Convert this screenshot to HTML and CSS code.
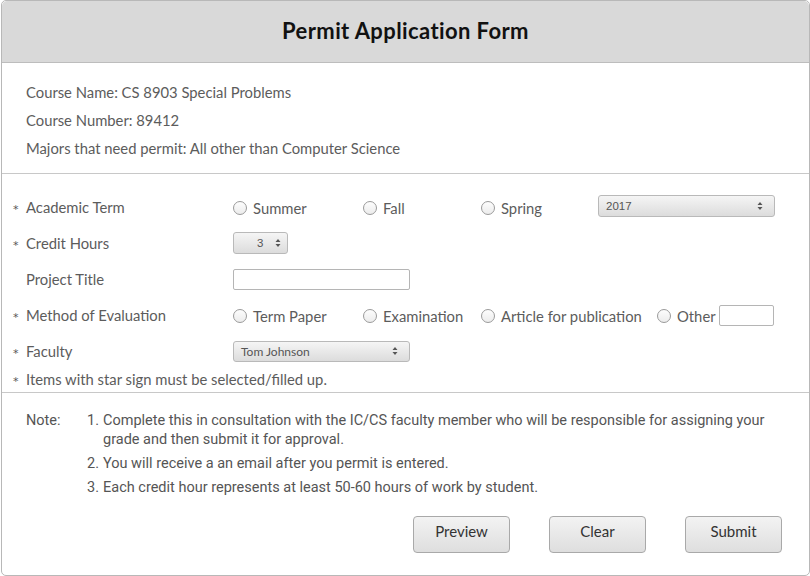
FILE: index.html
```html
<!DOCTYPE html>
<html>
<head>
<meta charset="utf-8">
<link rel="stylesheet" href="styles.css">
</head>
<body>
<div class="frame">
  <header class="head"><h1>Permit Application Form</h1></header>

  <section class="info">
    <p>Course Name: CS 8903 Special Problems</p>
    <p>Course Number: 89412</p>
    <p>Majors that need permit: All other than Computer Science</p>
  </section>

  <section class="form">
    <div class="row">
      <span class="star">*</span><span class="label">Academic Term</span>
      <div class="opts opts-term">
        <label class="opt"><span class="radio"></span>Summer</label>
        <label class="opt"><span class="radio"></span>Fall</label>
        <label class="opt"><span class="radio"></span>Spring</label>
        <div class="select select-year"><span>2017</span><span class="arrows"><svg width="6" height="10" viewBox="0 0 6 10"><path d="M0.5 4 L3 1 L5.5 4Z M0.5 6 L3 9 L5.5 6Z" fill="#555"/></svg></span></div>
      </div>
    </div>
    <div class="row">
      <span class="star">*</span><span class="label">Credit Hours</span>
      <div class="select spinner"><span>3</span><span class="arrows"><svg width="6" height="10" viewBox="0 0 6 10"><path d="M0.5 4 L3 1 L5.5 4Z M0.5 6 L3 9 L5.5 6Z" fill="#555"/></svg></span></div>
    </div>
    <div class="row">
      <span class="star"></span><span class="label">Project Title</span>
      <div class="textbox title-box"></div>
    </div>
    <div class="row">
      <span class="star">*</span><span class="label">Method of Evaluation</span>
      <div class="opts opts-method">
        <label class="opt"><span class="radio"></span>Term Paper</label>
        <label class="opt"><span class="radio"></span>Examination</label>
        <label class="opt"><span class="radio"></span>Article for publication</label>
        <label class="opt"><span class="radio"></span>Other<span class="textbox other-box"></span></label>
      </div>
    </div>
    <div class="row">
      <span class="star">*</span><span class="label">Faculty</span>
      <div class="select select-fac"><span>Tom Johnson</span><span class="arrows"><svg width="6" height="10" viewBox="0 0 6 10"><path d="M0.5 4 L3 1 L5.5 4Z M0.5 6 L3 9 L5.5 6Z" fill="#555"/></svg></span></div>
    </div>
    <div class="row row-note">
      <span class="star">*</span><span>Items with star sign must be selected/filled up.</span>
    </div>
  </section>

  <section class="notes">
    <div class="note-wrap">
      <span class="note-label">Note:</span>
      <ol class="note-list">
        <li><span class="num">1.</span><span>Complete this in consultation with the IC/CS faculty member who will be responsible for assigning your<br>grade and then submit it for approval.</span></li>
        <li><span class="num">2.</span><span>You will receive a an email after you permit is entered.</span></li>
        <li><span class="num">3.</span><span>Each credit hour represents at least 50-60 hours of work by student.</span></li>
      </ol>
    </div>
    <div class="buttons">
      <button class="btn">Preview</button>
      <button class="btn">Clear</button>
      <button class="btn">Submit</button>
    </div>
  </section>
</div>
</body>
</html>
```
FILE: styles.css
```css
html, body {
  margin: 0;
  padding: 0;
  background: #ffffff;
}
body {
  font-family: "Lato", "Open Sans", sans-serif;
  color: #5c5c5c;
}
.frame {
  width: 807px;
  height: 574px;
  margin-left: 1px;
  border: 1px solid #b8b8b8;
  border-radius: 5px;
  overflow: hidden;
  box-sizing: content-box;
}
.head {
  height: 61px;
  background: #d9d9d9;
  border-bottom: 1px solid #bdbdbd;
  border-radius: 5px 5px 0 0;
  display: flex;
  align-items: center;
  justify-content: center;
}
.head h1 {
  margin: 0;
  font-family: "Lato", sans-serif;
  font-weight: 700;
  font-size: 22px;
  color: #111111;
  letter-spacing: 0.4px;
  position: relative;
  top: -1px;
}
.info {
  padding: 15px 0 11px 24px;
  border-bottom: 1px solid #c8c8c8;
  height: 84px;
}
.info p {
  margin: 0;
  font-size: 14.8px;
  line-height: 28px;
}
.form {
  padding: 15px 0 3px 11px;
  height: 200px;
  border-bottom: 1px solid #c8c8c8;
}
.row {
  display: flex;
  align-items: center;
  height: 36px;
  font-size: 14.8px;
}
.row-note {
  height: 20px;
}
.star {
  width: 13px;
  font-family: "DejaVu Sans", sans-serif;
  font-size: 11px;
  line-height: 12px;
  height: 12px;
  color: #555;
  position: relative;
  top: 3px;
}
.label {
  width: 207px;
}
.opts {
  display: grid;
  align-items: center;
}
.opts-term {
  grid-template-columns: 130px 118px 117px 177px;
}
.opts-method {
  grid-template-columns: 130px 118px 176px auto;
}
.opt {
  display: flex;
  align-items: center;
  gap: 6px;
  position: relative;
  top: 1px;
}
.radio {
  width: 12px;
  height: 12px;
  border: 1px solid #9a9a9a;
  border-radius: 50%;
  background: linear-gradient(#fdfdfd, #ececec);
  flex: none;
}
.select {
  display: flex;
  align-items: center;
  justify-content: space-between;
  box-sizing: border-box;
  border: 1px solid #b9b9b9;
  border-radius: 3px;
  background: linear-gradient(#f5f5f5, #dcdcdc);
  font-family: "Liberation Sans", sans-serif;
  font-size: 11.5px;
  color: #555;
  padding: 0 11px 0 7px;
}
.arrows {
  display: flex;
  align-items: center;
}
.select-year {
  width: 177px;
  height: 22px;
  position: relative;
  top: -1px;
}
.spinner {
  width: 55px;
  height: 22px;
  padding: 0 6px 0 23px;
}
.select-fac {
  width: 177px;
  height: 21px;
  font-family: "Lato", sans-serif;
  font-size: 12px;
}
.textbox {
  display: block;
  box-sizing: border-box;
  border: 1px solid #b5b5b5;
  border-radius: 2px;
  background: #fff;
}
.title-box {
  width: 177px;
  height: 21px;
}
.other-box {
  width: 55px;
  height: 21px;
  margin-left: -3px;
  position: relative;
  top: -1px;
}
.notes {
  padding: 18px 27px 0 24px;
}
.note-wrap {
  display: flex;
  font-family: "Roboto", sans-serif;
  font-size: 14.5px;
  line-height: 19px;
  color: #555;
}
.note-label {
  width: 61px;
  flex: none;
}
.note-list {
  margin: 0;
  padding: 0;
  list-style: none;
}
.note-list li {
  display: flex;
  margin-bottom: 5px;
}
.note-list .num {
  width: 16px;
  flex: none;
}
.buttons {
  display: flex;
  justify-content: flex-end;
  gap: 39px;
  margin-top: 14px;
}
.btn {
  width: 97px;
  height: 37px;
  border: 1px solid #a9a9a9;
  border-radius: 4px;
  background: linear-gradient(#f3f3f3, #dedede);
  font-family: "Lato", sans-serif;
  font-size: 15px;
  color: #333333;
  padding: 0 0 7px 0;
}
```
